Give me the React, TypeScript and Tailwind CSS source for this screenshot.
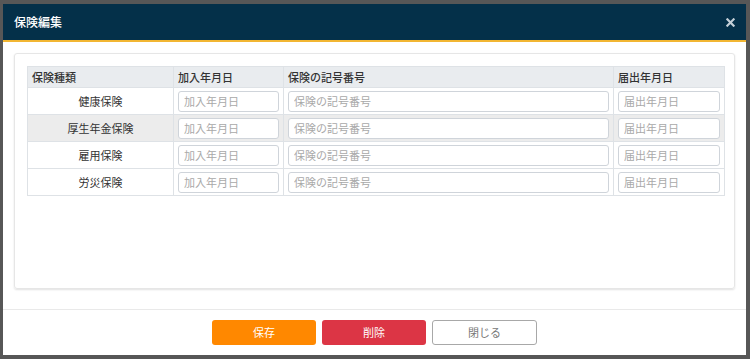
import React from "react";

const rows = ["健康保険", "厚生年金保険", "雇用保険", "労災保険"];

const Field = ({ placeholder }: { placeholder: string }) => (
  <input
    placeholder={placeholder}
    className="w-full h-[21px] rounded-[3px] border border-[#cfd4da] bg-white px-[5px] text-[11px] text-[#333] placeholder:text-[#a9a9a9] outline-none"
  />
);

export default function App() {
  return (
    <div
      className="w-[750px] h-[359px] bg-[#575757] pt-[4px] pl-[3px] pr-[4px] overflow-hidden"
      style={{ fontFamily: '"Noto Sans CJK JP", "Noto Sans", sans-serif' }}
    >
      <div className="h-[351px] bg-white flex flex-col">
        {/* header */}
        <div className="h-[38px] bg-[#043049] border-b-2 border-[#f2b632] flex items-center justify-between pl-[11px] pr-[11px]">
          <span className="text-white text-[12px] font-medium">保険編集</span>
          <svg width="9" height="9" viewBox="0 0 10 10">
            <path d="M1.5 1.5L8.5 8.5M8.5 1.5L1.5 8.5" stroke="#c5d0d8" strokeWidth="2.4" strokeLinecap="square" />
          </svg>
        </div>

        {/* body */}
        <div className="flex-1 px-[11px] pt-[11px]">
          <div className="h-[236px] rounded-[3px] border border-[#e6e6e6] shadow-[0_1px_2px_rgba(0,0,0,0.12)] px-[12px] pt-[12px]">
            <table className="w-[697px] table-fixed border-collapse text-[11px] text-[#333]">
              <thead>
                <tr className="bg-[#e9ecef] h-[21px]">
                  <th className="w-[146px] border border-[#dee2e6] text-left font-medium px-[4px]">保険種類</th>
                  <th className="w-[110px] border border-[#dee2e6] text-left font-medium px-[4px]">加入年月日</th>
                  <th className="w-[330px] border border-[#dee2e6] text-left font-medium px-[4px]">保険の記号番号</th>
                  <th className="w-[111px] border border-[#dee2e6] text-left font-medium px-[4px]">届出年月日</th>
                </tr>
              </thead>
              <tbody>
                {rows.map((r, i) => (
                  <tr key={r} className={i === 1 ? "bg-[#ececec] h-[27px]" : "h-[27px]"}>
                    <td className="border border-[#dee2e6] text-center">{r}</td>
                    <td className="border border-[#dee2e6] px-[4px]">
                      <Field placeholder="加入年月日" />
                    </td>
                    <td className="border border-[#dee2e6] px-[4px]">
                      <Field placeholder="保険の記号番号" />
                    </td>
                    <td className="border border-[#dee2e6] px-[4px]">
                      <Field placeholder="届出年月日" />
                    </td>
                  </tr>
                ))}
              </tbody>
            </table>
          </div>
        </div>

        {/* footer */}
        <div className="h-[46px] border-t border-[#e9e9e9] flex items-center justify-center gap-[6px]">
          <button className="w-[104px] h-[25px] rounded-[3px] bg-[#ff8800] text-white text-[11px]">保存</button>
          <button className="w-[104px] h-[25px] rounded-[3px] bg-[#dc3545] text-white text-[11px]">削除</button>
          <button className="w-[105px] h-[25px] rounded-[3px] bg-white border border-[#a8a8a8] text-[#777] text-[11px]">閉じる</button>
        </div>
      </div>
    </div>
  );
}
